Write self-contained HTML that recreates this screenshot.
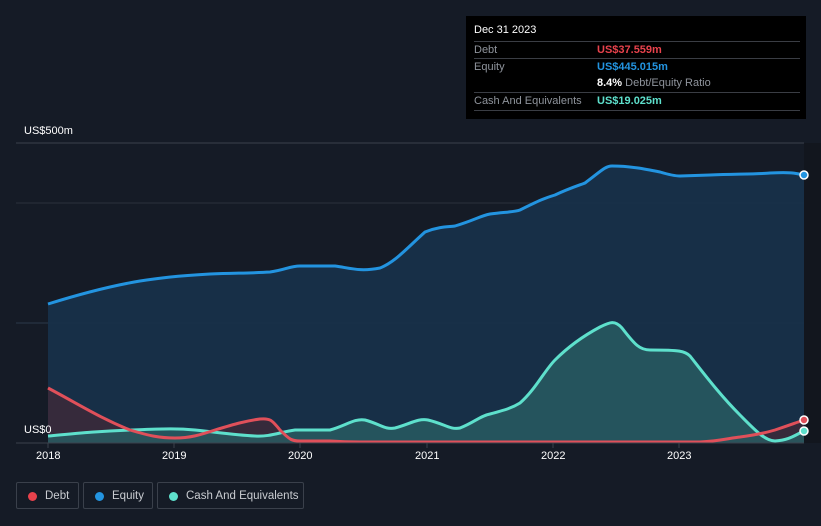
<!DOCTYPE html>
<html><head><meta charset="utf-8"><style>
html,body{margin:0;width:821px;height:526px;overflow:hidden}
body{background:#151b26;font-family:"Liberation Sans",sans-serif;position:relative}
svg{position:absolute;left:0;top:0}
.tt{position:absolute;left:466px;top:16px;width:340px;height:103px;background:#000;color:#fff;font-size:11px}
.tt .r{position:absolute;left:8px;right:6px;border-top:1px solid #3a3d44;height:17px;line-height:17px;white-space:nowrap}
.tt .l{position:absolute;left:0;color:#8f949c}
.tt .v{position:absolute;left:123px}
.lg{position:absolute;top:482px;height:27px;border:1px solid #3a404b;border-radius:2px;color:#c9ccd1;font-size:11.5px;line-height:26px;box-sizing:border-box;white-space:nowrap}
.lg i{position:absolute;left:11px;top:9px;width:9px;height:9px;border-radius:50%}
.lg span{position:absolute;left:28px}
.ax{position:absolute;color:#fff;font-size:11px;white-space:nowrap}
</style></head><body>
<svg width="821" height="526">
<rect x="804" y="143" width="17" height="300" fill="#12161e"/>
<line x1="16" y1="143" x2="804" y2="143" stroke="#3b414c"/>
<line x1="16" y1="203" x2="804" y2="203" stroke="#2a313c"/>
<line x1="16" y1="323" x2="804" y2="323" stroke="#2a3a4a"/>
<path d="M48,304 C80,294 110,286 140,281 C160,278 175,276 210,274 C240,273 255,273 270,272 C285,270 290,266 300,266 L335,266 C350,268 360,272 380,268 C395,262 405,250 425,232 C440,226 450,227 455,226 C475,220 480,216 490,214 C505,212 515,212 520,210 C540,200 545,198 555,195 C570,188 580,185 585,183 C600,172 605,166 612,166 C630,166 645,169 660,172 C670,175 675,176 680,176 L710,175 C740,174 760,174 770,173 C790,172 795,173 804,175 L804,443 L48,443 Z" fill="#173049" opacity="0.95"/>
<path d="M48,304 C80,294 110,286 140,281 C160,278 175,276 210,274 C240,273 255,273 270,272 C285,270 290,266 300,266 L335,266 C350,268 360,272 380,268 C395,262 405,250 425,232 C440,226 450,227 455,226 C475,220 480,216 490,214 C505,212 515,212 520,210 C540,200 545,198 555,195 C570,188 580,185 585,183 C600,172 605,166 612,166 C630,166 645,169 660,172 C670,175 675,176 680,176 L710,175 C740,174 760,174 770,173 C790,172 795,173 804,175" fill="none" stroke="#2394e0" stroke-width="3"/>
<path d="M48,388 C80,405 100,418 130,430 C150,436 160,438 175,438 C190,438 200,435 215,430 C235,424 245,421 260,419 C270,418 272,420 280,430 C290,440 292,441 300,441 L330,441 C345,442 350,442 360,442 L700,442 C720,441 730,438 740,437 C755,435 765,433 775,430 C790,425 795,423 804,420 L804,443 L48,443 Z" fill="#3a2a3a" opacity="0.9"/>
<path d="M48,436 C80,433 100,431 130,430 C160,429 175,428 195,430 C215,432 235,435 255,436 C270,437 280,432 295,430 L330,430 C345,426 355,418 365,420 C380,424 385,430 395,428 C410,424 418,418 428,420 C445,424 450,430 460,428 C475,422 480,416 490,414 C505,410 512,408 520,403 C535,390 545,370 555,360 C570,345 585,335 600,327 C610,322 615,320 622,328 C635,345 640,350 650,350 C680,350 685,351 690,356 C705,375 720,395 740,415 C755,430 765,441 775,441 C790,440 795,435 804,431 L804,443 L48,443 Z" fill="#285b62" opacity="0.85"/>
<path d="M48,436 C80,433 100,431 130,430 C160,429 175,428 195,430 C215,432 235,435 255,436 C270,437 280,432 295,430 L330,430 C345,426 355,418 365,420 C380,424 385,430 395,428 C410,424 418,418 428,420 C445,424 450,430 460,428 C475,422 480,416 490,414 C505,410 512,408 520,403 C535,390 545,370 555,360 C570,345 585,335 600,327 C610,322 615,320 622,328 C635,345 640,350 650,350 C680,350 685,351 690,356 C705,375 720,395 740,415 C755,430 765,441 775,441 C790,440 795,435 804,431" fill="none" stroke="#5ee0cc" stroke-width="3"/>
<path d="M48,388 C80,405 100,418 130,430 C150,436 160,438 175,438 C190,438 200,435 215,430 C235,424 245,421 260,419 C270,418 272,420 280,430 C290,440 292,441 300,441 L330,441 C345,442 350,442 360,442 L700,442 C720,441 730,438 740,437 C755,435 765,433 775,430 C790,425 795,423 804,420" fill="none" stroke="#e0505a" stroke-width="3"/>
<line x1="16" y1="443" x2="804" y2="443" stroke="#3b414c"/>
<g stroke="#3b414c"><line x1="48" y1="443" x2="48" y2="448"/><line x1="174" y1="443" x2="174" y2="448"/><line x1="300" y1="443" x2="300" y2="448"/><line x1="427" y1="443" x2="427" y2="448"/><line x1="553" y1="443" x2="553" y2="448"/><line x1="679" y1="443" x2="679" y2="448"/></g>
<circle cx="804" cy="175" r="4" fill="#2394e0" stroke="#fff" stroke-width="1.5"/>
<circle cx="804" cy="420" r="4" fill="#e0505a" stroke="#fff" stroke-width="1.5"/>
<circle cx="804" cy="431" r="4" fill="#5ee0cc" stroke="#fff" stroke-width="1.5"/>
</svg>
<div class="ax" style="left:24px;top:125px">US$500m</div>
<div class="ax" style="left:24px;top:424px">US$0</div>
<div class="ax" style="left:36px;top:450px">2018</div>
<div class="ax" style="left:162px;top:450px">2019</div>
<div class="ax" style="left:288px;top:450px">2020</div>
<div class="ax" style="left:415px;top:450px">2021</div>
<div class="ax" style="left:541px;top:450px">2022</div>
<div class="ax" style="left:667px;top:450px">2023</div>
<div class="tt">
<div style="position:absolute;left:8px;top:8px;font-size:11px">Dec 31 2023</div>
<div class="r" style="top:25px"><span class="l">Debt</span><span class="v" style="color:#e8424c;font-weight:bold">US$37.559m</span></div>
<div class="r" style="top:42px"><span class="l">Equity</span><span class="v" style="color:#2394e0;font-weight:bold">US$445.015m</span></div>
<div class="r" style="top:59px;border-top:none"><span class="v"><b>8.4%</b> <span style="color:#8f949c">Debt/Equity Ratio</span></span></div>
<div class="r" style="top:76px;border-bottom:1px solid #3a3d44"><span class="l">Cash And Equivalents</span><span class="v" style="color:#5ee0cc;font-weight:bold">US$19.025m</span></div>
</div>
<div class="lg" style="left:16px;width:63px"><i style="background:#e8424c"></i><span>Debt</span></div>
<div class="lg" style="left:83px;width:70px"><i style="background:#2394e0"></i><span>Equity</span></div>
<div class="lg" style="left:157px;width:147px"><i style="background:#5ee0cc"></i><span>Cash And Equivalents</span></div>
</body></html>
